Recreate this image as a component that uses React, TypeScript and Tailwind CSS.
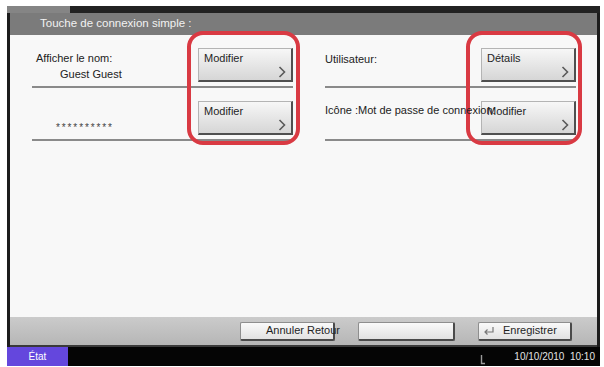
import type { ReactNode } from "react";

const font = { fontFamily: '"Liberation Sans", Arial, sans-serif' };

const Chevron = () => (
  <svg width="8" height="12" viewBox="0 0 8 12" className="text-[#5a5a5a]">
    <path d="M1.5 1 L6.5 6 L1.5 11" fill="none" stroke="currentColor" strokeWidth="1.6" />
  </svg>
);

const TouchButton = ({ label }: { label: string }) => (
  <div className="flex h-[34px] w-[95px] shrink-0 flex-col border border-[#b4b4b4] border-r-2 border-b-2 border-r-[#4f4f4f] border-b-[#4f4f4f] bg-gradient-to-b from-[#f7f7f7] to-[#d6d6d6] pl-[5px] pr-[5px] pt-[2px] pb-[2px]">
    <span className="text-[11px] leading-[14px] text-[#1f1f1f]">{label}</span>
    <span className="mt-auto self-end">
      <Chevron />
    </span>
  </div>
);

const Row = ({ children, button }: { children: ReactNode; button: string }) => (
  <div className="flex items-start border-b-2 border-[#8a8a8a] pt-[13px] pb-[4px]">
    <div className="relative z-10 min-w-0 flex-1 whitespace-nowrap">{children}</div>
    <TouchButton label={button} />
  </div>
);

const BarButton = ({ children, className }: { children?: ReactNode; className?: string }) => (
  <div
    className={
      "flex h-[19px] items-center whitespace-nowrap rounded-[2px] border border-[#8e8e8e] border-r-2 border-b-2 border-r-[#4a4a4a] border-b-[#4a4a4a] bg-gradient-to-b from-[#fafafa] to-[#e2e2e2] text-[11px] text-[#1f1f1f] " +
      (className ?? "")
    }
  >
    {children}
  </div>
);

export default function App() {
  return (
    <div className="h-[367px] w-[604px] overflow-hidden bg-white" style={font}>
      <div className="relative ml-[7px] mt-[6px] flex w-[593px] flex-col">
        {/* top strip */}
        <div className="flex h-[7px]">
          <div className="w-[63px] bg-[#858585]" />
          <div className="flex-1 bg-[#222222]" />
        </div>

        <div className="flex flex-col border-x-[3px] border-[#1c1c1c]">
          {/* title */}
          <div className="flex h-[22px] items-center bg-[#7b7b7b] pl-[30px] text-[11.5px] text-[#f2f2f2]">
            Touche de connexion simple :
          </div>

          {/* content */}
          <div className="grid h-[282px] grid-cols-[261px_251px] content-start gap-x-[32px] bg-[#f8f8f8] pl-[22px]">
            <div className="flex flex-col">
              <Row button="Modifier">
                <div className="mt-[2px] pl-[4px] text-[11px] leading-[16px] text-[#222]">
                  <div>Afficher le nom:</div>
                  <div className="pl-[24px]">Guest Guest</div>
                </div>
              </Row>
              <Row button="Modifier">
                <div className="mt-[20px] pl-[24px] text-[10px] leading-[14px] tracking-[1.9px] text-[#444]">
                  **********
                </div>
              </Row>
            </div>
            <div className="flex flex-col">
              <Row button="Détails">
                <div className="mt-[4px] text-[11px] leading-[14px] text-[#222]">Utilisateur:</div>
              </Row>
              <Row button="Modifier">
                <div className="mt-[2px] text-[11px] leading-[14px] text-[#222]">
                  Icône :Mot de passe de connexion:
                </div>
              </Row>
            </div>
          </div>

          {/* bottom bar */}
          <div className="flex h-[30px] items-center justify-end gap-[23px] border-b-2 border-[#3a3a3a] bg-gradient-to-b from-[#cbcbcb] to-[#b6b6b6] pr-[25px]">
            <BarButton className="w-[95px] pl-[25px]">Annuler Retour</BarButton>
            <BarButton className="w-[97px]" />
            <BarButton className="w-[94px] gap-[8px] pl-[4px]">
              <svg width="12" height="10" viewBox="0 0 12 10" className="text-[#777]">
                <path d="M10 1 V6 H2 M4.5 3.5 L2 6 L4.5 8.5" fill="none" stroke="currentColor" strokeWidth="1.2" />
              </svg>
              <span>Enregistrer</span>
            </BarButton>
          </div>
        </div>

        {/* status bar */}
        <div className="flex h-[19px] items-center bg-[#050505]">
          <div className="flex h-full w-[61px] items-center justify-center bg-[#6447dd] text-[10px] text-white">
            État
          </div>
          <div className="flex-1" />
          <svg width="6" height="10" viewBox="0 0 6 10" className="mr-[28px] mt-[6px] text-[#9a9a9a]">
            <path d="M1.5 0 V8.5 H5" fill="none" stroke="currentColor" strokeWidth="1.4" />
          </svg>
          <span className="whitespace-pre pr-[5px] text-[10px] text-[#e4e4e4]">10/10/2010  10:10</span>
        </div>

        {/* annotation rings */}
        <div className="absolute left-[180px] top-[25px] h-[114px] w-[113px] rounded-[16px] border-[4px] border-[#d93a43]" />
        <div className="absolute left-[459px] top-[25px] h-[114px] w-[116px] rounded-[16px] border-[4px] border-[#d93a43]" />
      </div>
    </div>
  );
}
